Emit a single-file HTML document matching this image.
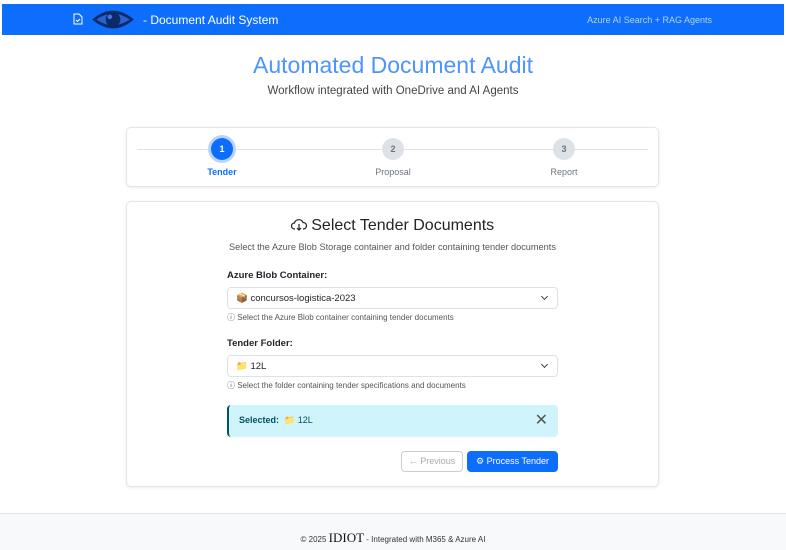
<!DOCTYPE html>
<html><head><meta charset="utf-8"><style>
*{box-sizing:border-box;margin:0;padding:0}
body{width:786px;height:550px;background:#fff;font-family:"Liberation Sans","DejaVu Sans",sans-serif;color:#212529;position:relative;overflow:hidden}
.nav{position:absolute;left:2px;top:4px;width:782px;height:31px;background:#0d6efd;color:#fff}
.nav .brand{position:absolute;left:141px;top:9px;font-size:12px}
.nav .right{position:absolute;right:72px;top:11px;font-size:9px;color:#b6d0fb}
h1{position:absolute;top:52px;width:786px;text-align:center;font-weight:normal;font-size:23px;color:#4d94fd}
.sub{position:absolute;top:85px;width:786px;text-align:center;font-size:11.5px;color:#444}
.card{position:absolute;left:126px;width:533px;background:#fff;border:1px solid #e3e5e8;border-radius:5px;box-shadow:0 1px 3px rgba(0,0,0,.08)}
.line{position:absolute;left:10px;right:10px;top:21px;height:1px;background:#dee2e6}
.step{position:absolute;top:10px;width:22px;height:22px;border-radius:50%;background:#dee2e6;color:#6c757d;font-size:9px;font-weight:bold;text-align:center;line-height:22px}
.lbl{position:absolute;top:39px;font-size:9px;color:#6c757d;width:80px;text-align:center}
.sel{position:absolute;left:100px;width:331px;height:22px;border:1px solid #dee2e6;border-radius:4px;font-size:9.5px;padding:5px 8px}
.sel:after{content:"";position:absolute;right:10px;top:6px;width:4px;height:4px;border-right:1.2px solid #444;border-bottom:1.2px solid #444;transform:rotate(45deg)}
.lab{position:absolute;left:100px;font-size:9.5px;font-weight:bold}
.help{position:absolute;left:100px;font-size:8px;color:#555}
</style></head><body>
<div class="nav">
<svg style="position:absolute;left:71px;top:9px" width="10" height="12" viewBox="0 0 10 12"><path d="M1 1h5l3 3v7H1z" fill="none" stroke="#fff" stroke-width="1"/><path d="M3 7l1.5 1.5L7 6" fill="none" stroke="#fff" stroke-width="1"/></svg>
<svg style="position:absolute;left:89px;top:4px" width="44" height="23" viewBox="0 0 42 22"><path d="M1 11Q21 -6 41 11Q21 28 1 11z" fill="#0b2a6b"/><path d="M5 11Q21 0 37 11Q21 22 5 11z" fill="#2a63d0"/><circle cx="21" cy="11" r="7" fill="#0b2a6b"/><circle cx="18" cy="8.5" r="2.2" fill="#3a78e0"/></svg>
<div class="brand">- Document Audit System</div>
<div class="right">Azure AI Search + RAG Agents</div>
</div>
<h1>Automated Document Audit</h1>
<div class="sub">Workflow integrated with OneDrive and AI Agents</div>
<div class="card" style="top:127px;height:60px">
<div class="line"></div>
<div class="step" style="left:84px;background:#0d6efd;color:#fff;box-shadow:0 0 0 3px #b9d4fd">1</div>
<div class="lbl" style="left:55px;color:#0d6efd;font-weight:bold">Tender</div>
<div class="step" style="left:255px">2</div>
<div class="lbl" style="left:226px">Proposal</div>
<div class="step" style="left:426px">3</div>
<div class="lbl" style="left:397px">Report</div>
</div>
<div class="card" style="top:201px;height:286px">
<div style="position:absolute;top:15px;width:100%;text-align:center;font-size:16px">
<svg width="16" height="13" viewBox="0 0 16 13" style="vertical-align:-1px"><path d="M4 11H3.5A3 3 0 0 1 3.5 5 4.5 4.5 0 0 1 12 4.5 3 3 0 0 1 12.5 11H12" fill="none" stroke="#222" stroke-width="1.2"/><path d="M8 6v6M6 10l2 2 2-2" fill="none" stroke="#222" stroke-width="1.2"/></svg> Select Tender Documents</div>
<div style="position:absolute;top:40px;width:100%;text-align:center;font-size:9.2px;color:#555">Select the Azure Blob Storage container and folder containing tender documents</div>
<div class="lab" style="top:68px">Azure Blob Container:</div>
<div class="sel" style="top:85px">📦 concursos-logistica-2023</div>
<div class="help" style="top:110px">ⓘ Select the Azure Blob container containing tender documents</div>
<div class="lab" style="top:136px">Tender Folder:</div>
<div class="sel" style="top:153px">📁 12L</div>
<div class="help" style="top:178px">ⓘ Select the folder containing tender specifications and documents</div>
<div style="position:absolute;left:100px;top:203px;width:331px;height:32px;background:#cff4fc;border-left:2px solid #055160;border-radius:4px;font-size:9px;color:#055160;padding:10px 10px"><b>Selected:</b>&nbsp; 📁 12L<span style="position:absolute;right:10px;top:5px;font-size:16px;color:#555">✕</span></div>
<div style="position:absolute;left:274px;top:249px;width:62px;height:21px;border:1px solid #ccc;border-radius:4px;font-size:9px;color:#aaa;text-align:center;line-height:19px">← Previous</div>
<div style="position:absolute;left:340px;top:249px;width:91px;height:21px;background:#0d6efd;border-radius:4px;font-size:9px;color:#fff;text-align:center;line-height:21px">⚙ Process Tender</div>
</div>
<div style="position:absolute;left:0;top:513px;width:786px;height:37px;background:#f8f9fa;border-top:1px solid #e3e5e8;text-align:center;font-size:8px;color:#333;padding-top:16px">© 2025 <span style="font-family:'Liberation Serif',serif;font-size:13px;color:#111">IDIOT</span> - Integrated with M365 &amp; Azure AI</div>
</body></html>
